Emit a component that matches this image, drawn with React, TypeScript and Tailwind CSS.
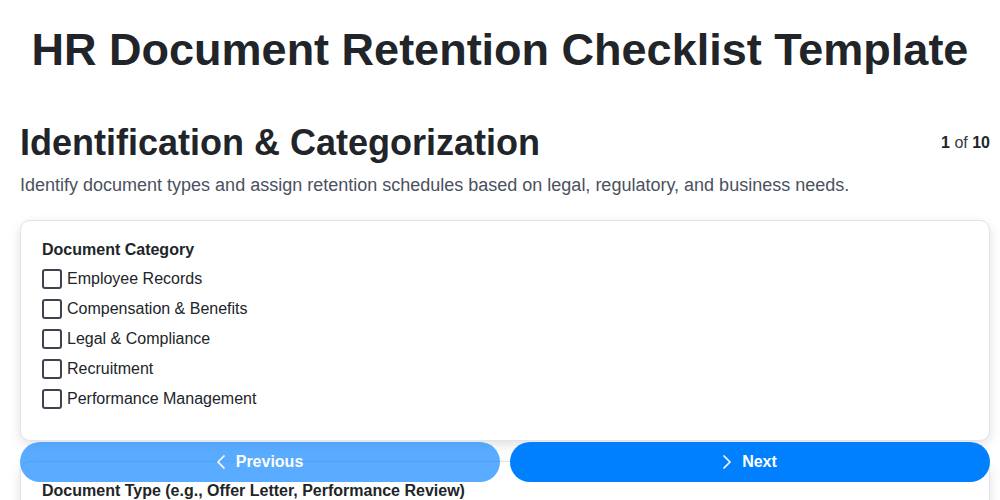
const categories = [
  'Employee Records',
  'Compensation & Benefits',
  'Legal & Compliance',
  'Recruitment',
  'Performance Management',
];

function Checkbox({ label }: { label: string }) {
  return (
    <label className="flex h-[30px] items-center gap-[5px] text-[16px] text-[#212529]">
      <span className="h-5 w-5 rounded-[3px] border-2 border-[#3f4350] bg-white" />
      {label}
    </label>
  );
}

function Chevron({ dir }: { dir: 'left' | 'right' }) {
  return (
    <svg width="8" height="14" viewBox="0 0 8 14" fill="none" stroke="currentColor" strokeWidth="1.7" strokeLinecap="round" strokeLinejoin="round">
      {dir === 'left' ? <polyline points="7,1 1,7 7,13" /> : <polyline points="1,1 7,7 1,13" />}
    </svg>
  );
}

export default function App() {
  return (
    <div className="min-h-[500px] bg-white font-['Liberation_Sans',Arial,sans-serif] text-[#212529]">
      <h1 className="pt-[23px] text-center text-[45px] font-bold leading-[54px]">
        HR Document Retention Checklist Template
      </h1>

      <div className="pl-5 pr-[10px] pt-[44px]">
        <div className="flex items-center justify-between">
          <h2 className="text-[36px] font-bold leading-[43px]">Identification &amp; Categorization</h2>
          <span className="text-[16px] text-[#343a40]">
            <strong className="text-[#212529]">1</strong> of <strong className="text-[#212529]">10</strong>
          </span>
        </div>
        <p className="mt-2 text-[18px] leading-[27px] text-[#4a5160]">
          Identify document types and assign retention schedules based on legal, regulatory, and business needs.
        </p>

        <div className="mt-[21px] rounded-[10px] border border-[#e3e4ea] bg-white px-[21px] pb-[26px] pt-5 shadow-[0_4px_12px_rgba(0,0,0,0.12)]">
          <div className="mb-[5px] text-[16px] font-bold leading-[18px]">Document Category</div>
          {categories.map((c) => (
            <Checkbox key={c} label={c} />
          ))}
        </div>

        <div className="mt-5 rounded-[10px] border border-[#e3e4ea] bg-white px-[21px] pb-[27px] pt-5 shadow-[0_4px_12px_rgba(0,0,0,0.12)]">
          <div className="mb-1 text-[16px] font-bold leading-[18px]">
            Document Type (e.g., Offer Letter, Performance Review)
          </div>
          <div className="h-[60px]" />
        </div>
      </div>

      <div className="fixed bottom-[18px] left-5 right-[10px] flex gap-[10px]">
        <button className="flex h-10 flex-1 items-center justify-center gap-[11px] rounded-full bg-[#0080ff] text-[16px] font-bold text-white opacity-65">
          <Chevron dir="left" />
          Previous
        </button>
        <button className="flex h-10 flex-1 items-center justify-center gap-[11px] rounded-full bg-[#0080ff] text-[16px] font-bold text-white">
          <Chevron dir="right" />
          Next
        </button>
      </div>
    </div>
  );
}
